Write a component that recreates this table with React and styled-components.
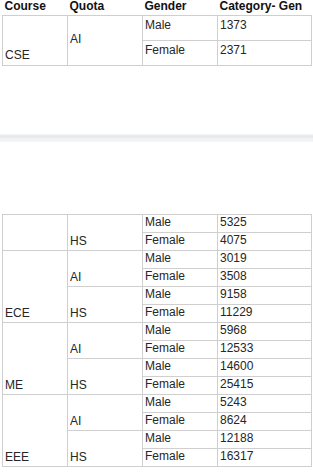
import React from "react";
import styled, { createGlobalStyle } from "styled-components";

const Global = createGlobalStyle`
body {
  margin: 0;
  background: #ffffff;
  font-family: "Liberation Sans", Arial, sans-serif;
}
`;

const Page = styled.div`
display: flex;
flex-direction: column;
width: 313px;
`;

const Table = styled.table`
border-collapse: collapse;
table-layout: fixed;
width: 309px;
margin-left: 2px;
font-size: 12px;
color: #262626;
`;

const Head = styled.th`
font-size: 12px;
font-weight: bold;
color: #111111;
text-align: left;
padding: 0 2px;
height: 15px;
line-height: 13px;
vertical-align: top;
border-bottom: 1px solid #cfcfcf;
`;

const Cell = styled.td`
border: 1px solid #cfcfcf;
padding: ${(p) => p.$pad || "0 2px"};
line-height: 13px;
vertical-align: ${(p) => p.$v || "top"};
`;

const Row = styled.tr`
height: ${(p) => p.$h}px;
`;

const Band = styled.div`
height: 8px;
margin: 68px 0 72px;
background: linear-gradient(#f6f7f8 0, #e4e6e8 30%, #eef0f2 55%, #f5f6f7 100%);
`;

const groups = [
  { course: "", quota: "HS", vals: [5325, 4075], span: 2 },
  { course: "ECE", quota: "AI", vals: [3019, 3508], span: 4 },
  { course: null, quota: "HS", vals: [9158, 11229] },
  { course: "ME", quota: "AI", vals: [5968, 12533], span: 4 },
  { course: null, quota: "HS", vals: [14600, 25415] },
  { course: "EEE", quota: "AI", vals: [5243, 8624], span: 4 },
  { course: null, quota: "HS", vals: [12188, 16317] },
];

function Cols() {
  return (
    <colgroup>
      <col style={{ width: 65 }} />
      <col style={{ width: 75 }} />
      <col style={{ width: 75 }} />
      <col style={{ width: 94 }} />
    </colgroup>
  );
}

export default function App() {
  return (
    <Page>
      <Global />
      <Table>
        <Cols />
        <thead>
          <tr>
            <Head>Course</Head>
            <Head>Quota</Head>
            <Head>Gender</Head>
            <Head>Category- Gen</Head>
          </tr>
        </thead>
        <tbody>
          <Row $h={25}>
            <Cell rowSpan={2} $v="bottom" $pad="0 2px 3px">CSE</Cell>
            <Cell rowSpan={2} $v="middle" $pad="0 2px 3px">AI</Cell>
            <Cell $v="top" $pad="3px 2px 0">Male</Cell>
            <Cell $v="top" $pad="3px 2px 0">1373</Cell>
          </Row>
          <Row $h={25}>
            <Cell $v="top" $pad="3px 2px 0">Female</Cell>
            <Cell $v="top" $pad="3px 2px 0">2371</Cell>
          </Row>
        </tbody>
      </Table>
      <Band />
      <Table>
        <Cols />
        <tbody>
          {groups.map((g, i) => (
            <React.Fragment key={i}>
              <Row $h={18}>
                {g.course !== null && (
                  <Cell rowSpan={g.span} $v="bottom" $pad="0 2px 2px">{g.course}</Cell>
                )}
                <Cell rowSpan={2} $v="bottom" $pad="0 2px 2px">{g.quota}</Cell>
                <Cell $pad="1px 2px 0">Male</Cell>
                <Cell $pad="1px 2px 0">{g.vals[0]}</Cell>
              </Row>
              <Row $h={18}>
                <Cell $pad="1px 2px 0">Female</Cell>
                <Cell $pad="1px 2px 0">{g.vals[1]}</Cell>
              </Row>
            </React.Fragment>
          ))}
        </tbody>
      </Table>
    </Page>
  );
}
